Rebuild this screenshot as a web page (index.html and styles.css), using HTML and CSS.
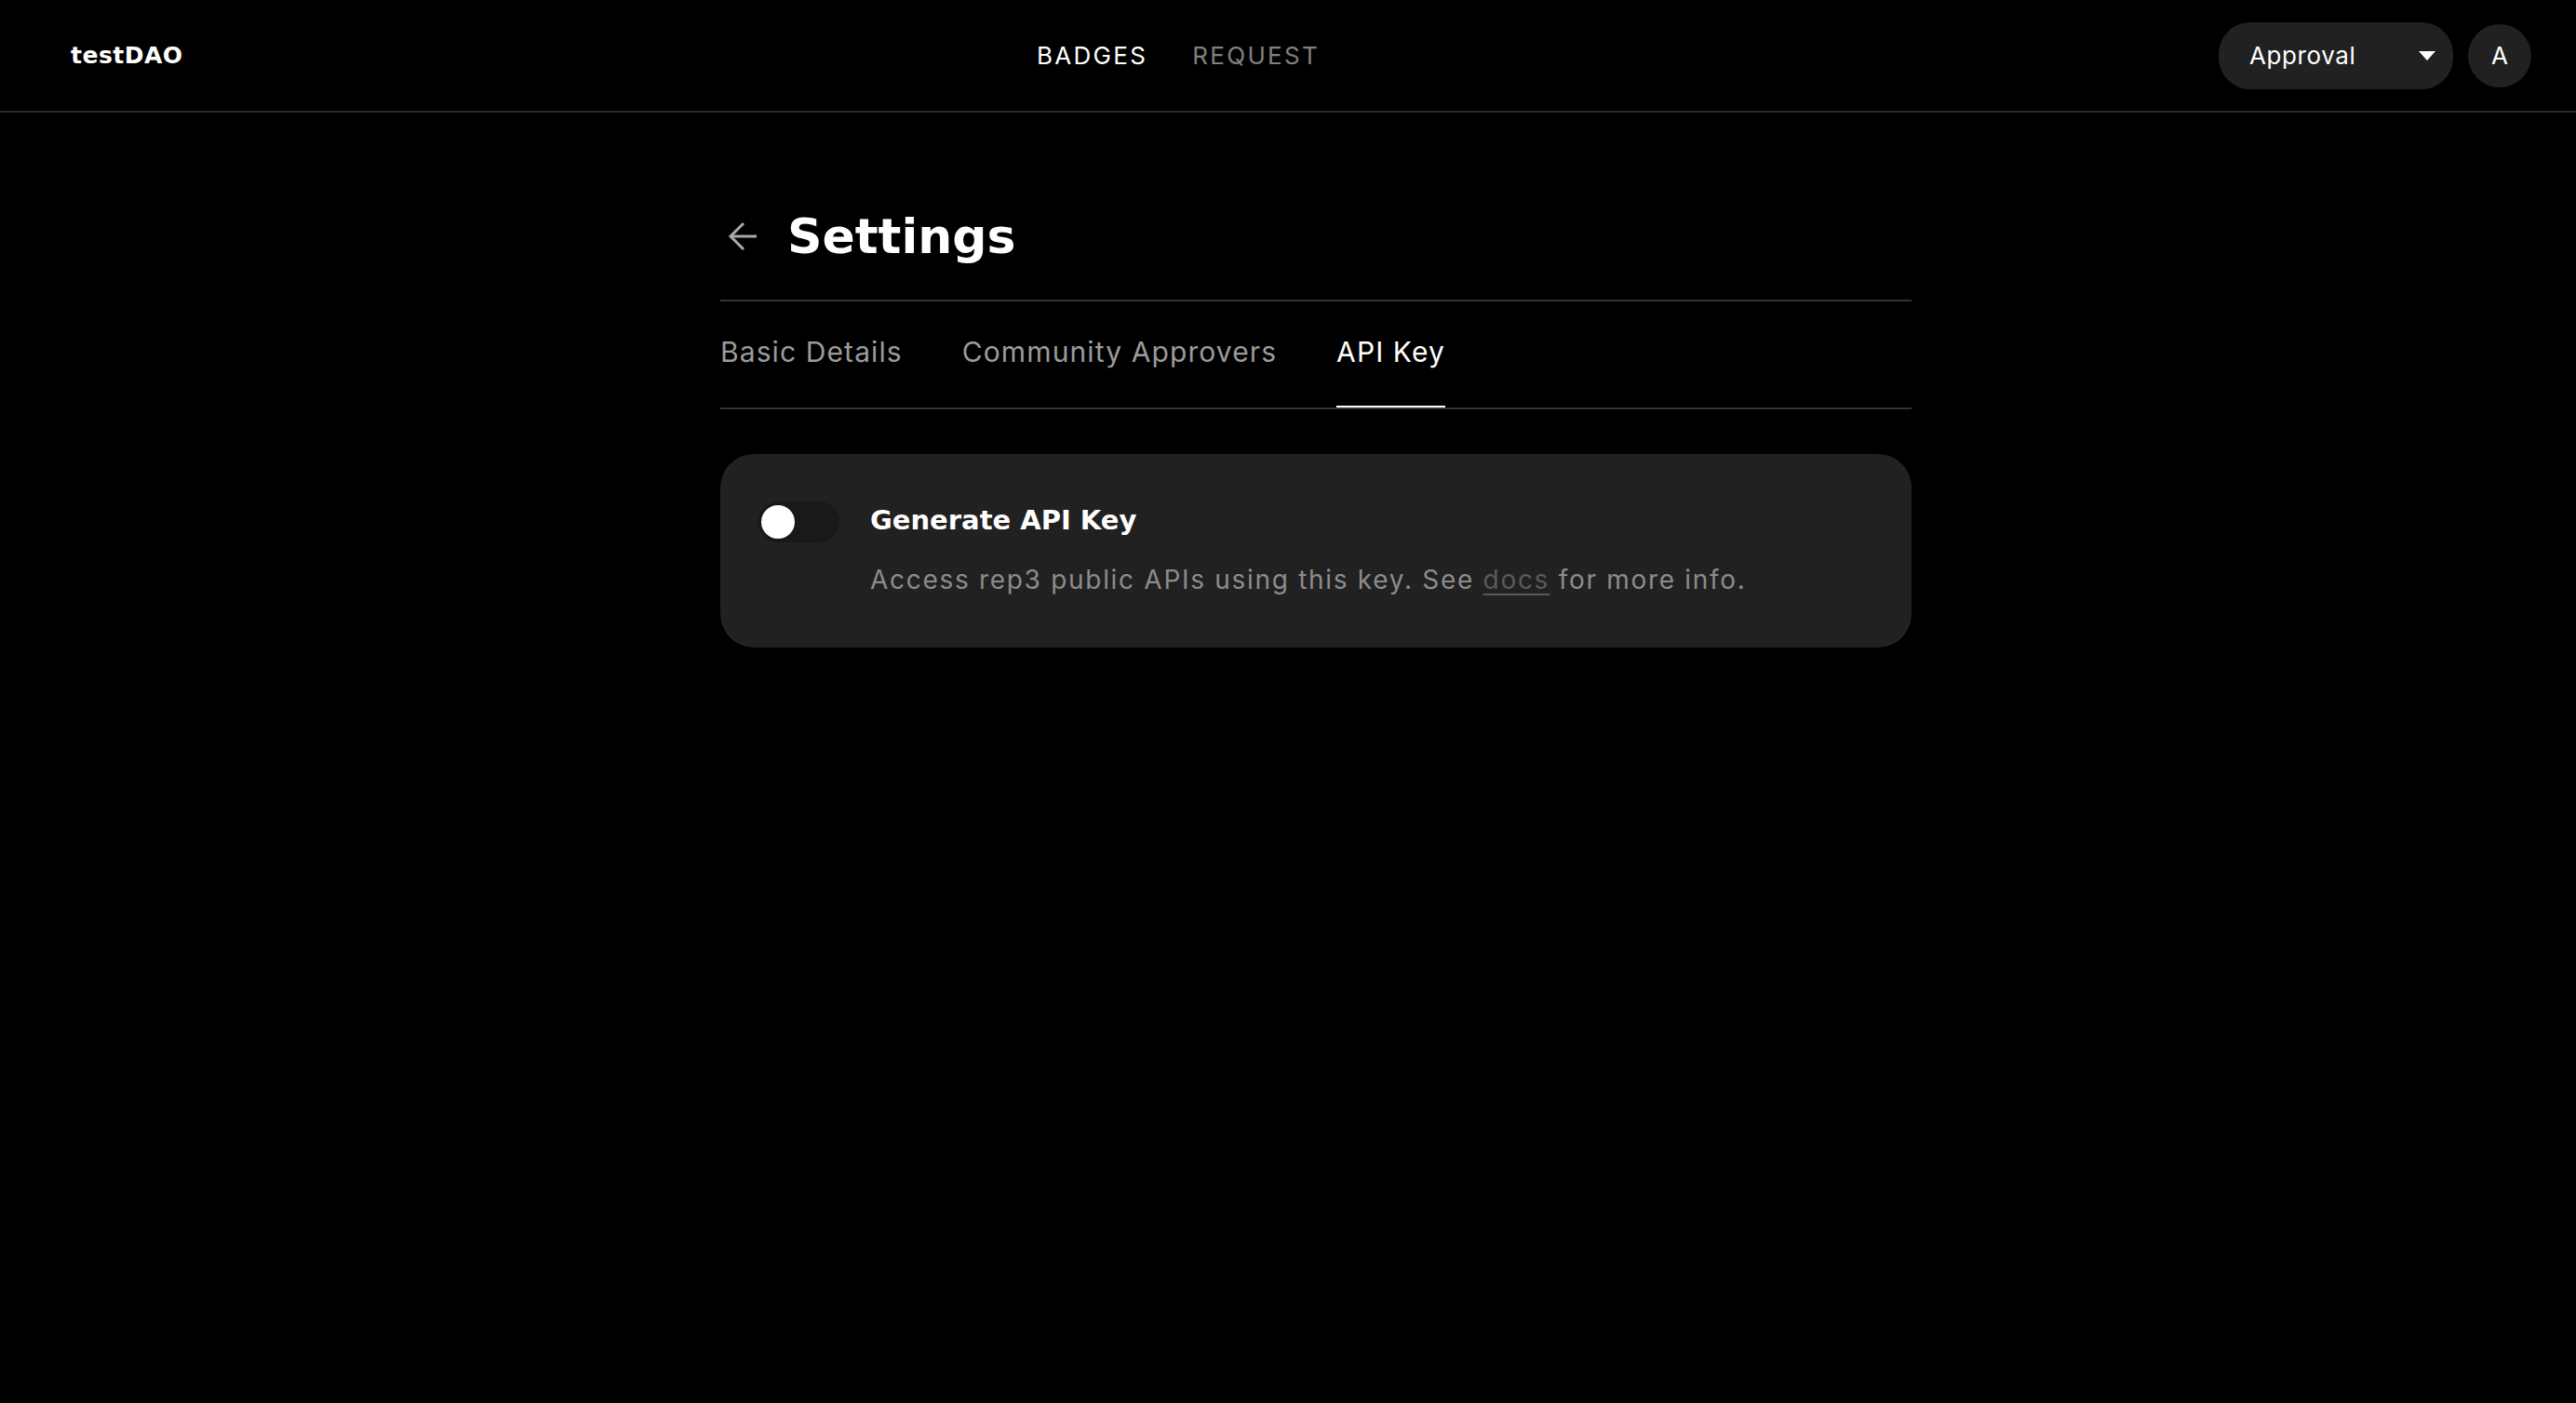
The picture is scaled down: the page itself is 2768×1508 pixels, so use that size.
FILE: index.html
```html
<!DOCTYPE html>
<html lang="en">

<head>
    <meta charset="UTF-8">
    <meta name="viewport" content="width=device-width, initial-scale=1.0">
    <title>Settings</title>
    <link rel="stylesheet" href="styles.css">
</head>

<body>
    <header class="topbar">
        <div class="logo">testDAO</div>
        <nav class="topnav">
            <a href="#" class="active">BADGES</a>
            <a href="#">REQUEST</a>
        </nav>
        <div class="account">
            <button class="role-select">
                <span>Approval</span>
                <svg width="18" height="10" viewBox="0 0 18 10"><path d="M0 0 H18 L9 10 Z" fill="#fff"/></svg>
            </button>
            <div class="avatar">A</div>
        </div>
    </header>

    <main class="settings">
        <div class="title-row">
            <a href="#" class="back">
                <svg width="32" height="32" viewBox="0 0 32 32" fill="none" stroke="#a8a8a8" stroke-width="3">
                    <path d="M3 16 H31"/>
                    <path d="M17 2 L3 16 L17 30"/>
                </svg>
            </a>
            <h1>Settings</h1>
        </div>

        <div class="tabs">
            <a href="#" class="tab">Basic Details</a>
            <a href="#" class="tab">Community Approvers</a>
            <a href="#" class="tab current">API Key</a>
        </div>

        <section class="card">
            <label class="switch">
                <span class="knob"></span>
            </label>
            <div class="card-text">
                <h2>Generate API Key</h2>
                <p>Access rep3 public APIs using this key. See <a href="#">docs</a> for more info.</p>
            </div>
        </section>
    </main>
</body>

</html>
```

FILE: styles.css
```css
* {
    box-sizing: border-box;
}

body {
    margin: 0;
    background: #000;
    color: #fff;
    font-family: Inter, "Liberation Sans", sans-serif;
}

a {
    color: inherit;
    text-decoration: none;
}

/* top bar */
.topbar {
    display: flex;
    align-items: center;
    height: 121px;
    padding: 0 48px 0 76px;
    border-bottom: 2px solid #2a2930;
}

.logo {
    width: 1038px;
    font-family: "DejaVu Sans", sans-serif;
    font-weight: 700;
    font-size: 25px;
    letter-spacing: 0.5px;
}

.topnav {
    display: flex;
    gap: 48px;
}

.topnav a {
    font-size: 26px;
    letter-spacing: 2.3px;
    color: #808080;
}

.topnav a.active {
    color: #fff;
}

.account {
    margin-left: auto;
    display: flex;
    align-items: center;
    gap: 16px;
}

.role-select {
    display: flex;
    align-items: center;
    justify-content: space-between;
    width: 252px;
    height: 72px;
    padding: 0 19px 0 33px;
    border: none;
    border-radius: 34px;
    background: #212121;
    color: #fff;
    font-family: Inter, sans-serif;
    font-size: 26px;
    letter-spacing: 0.6px;
}

.avatar {
    width: 68px;
    height: 68px;
    border-radius: 50%;
    background: #212121;
    display: flex;
    align-items: center;
    justify-content: center;
    font-size: 26px;
}

/* settings page */
.settings {
    width: 1280px;
    margin-left: calc(50% - 610px);
    padding-top: 101px;
}

.title-row {
    display: flex;
    align-items: center;
    gap: 32px;
    height: 64px;
    margin-bottom: 36px;
}

.back {
    display: flex;
    margin-left: 8px;
}

h1 {
    margin: 0;
    font-family: "DejaVu Sans", sans-serif;
    font-weight: 700;
    font-size: 52px;
    line-height: 64px;
}

.tabs {
    display: flex;
    gap: 64px;
    border-top: 2px solid #333;
    border-bottom: 2px solid #333;
}

.tab {
    padding: 36px 0 40px;
    border-bottom: 2px solid transparent;
    font-size: 30px;
    line-height: 36px;
    letter-spacing: 1.1px;
    color: #9b9b9b;
}

.tab.current {
    color: #fff;
    border-bottom-color: #fff;
}

.card {
    display: flex;
    align-items: flex-start;
    gap: 33px;
    margin-top: 48px;
    padding: 51px 40px 55px;
    border-radius: 36px;
    background: #212121;
}

.switch {
    display: flex;
    align-items: center;
    width: 88px;
    height: 44px;
    padding: 0 4px;
    border-radius: 22px;
    background: #191919;
}

.knob {
    width: 36px;
    height: 36px;
    border-radius: 50%;
    background: #fff;
}

.card-text {
    padding-top: 2px;
}

h2 {
    margin: 0;
    font-family: "DejaVu Sans", sans-serif;
    font-weight: 700;
    font-size: 29px;
    line-height: 36px;
}

.card-text p {
    margin: 28px 0 0;
    font-size: 28px;
    line-height: 36px;
    letter-spacing: 1.7px;
    color: #8c8c8c;
}

.card-text p a {
    color: #5a5a5a;
    text-decoration: underline;
    text-underline-offset: 5px;
}
```
